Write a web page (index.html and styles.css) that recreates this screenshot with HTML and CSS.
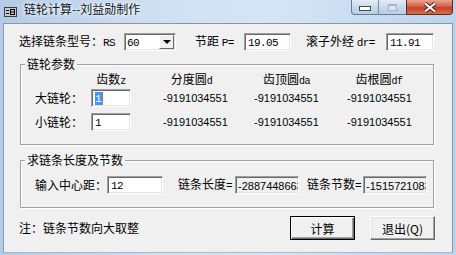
FILE: index.html
```html
<!doctype html>
<html lang="zh-CN">
<head>
  <meta charset="utf-8">
  <title>链轮计算--刘益勋制作</title>
  <link rel="stylesheet" href="styles.css">
</head>
<body>
  <div class="window">

    <!-- title bar -->
    <div class="titlebar">
      <svg class="appicon" width="13" height="10" viewBox="0 0 13 10">
        <rect x="0.5" y="0.5" width="12" height="9" fill="#c8c8c8" stroke="#3c3c3c"/>
        <path d="M2 3.5h3M2 6.5h3" stroke="#000"/>
        <rect x="6.5" y="2.5" width="4" height="5" fill="none" stroke="#000"/>
        <path d="M7 5h3" stroke="#000"/>
      </svg>
      <span class="title">链轮计算--刘益勋制作</span>
      <div class="caption">
        <div class="capgroup">
          <span class="capbtn btnmin"><i></i></span>
          <span class="capbtn btnmax"><i></i></span>
        </div>
        <span class="btnclose">
          <svg width="14" height="11" viewBox="0 0 14 11">
            <path d="M2 1.5l10 8M12 1.5l-10 8" stroke="#5a2418" stroke-width="4"/>
            <path d="M2 1.5l10 8M12 1.5l-10 8" stroke="#fff" stroke-width="2"/>
          </svg>
        </span>
      </div>
    </div>

    <div class="client">

      <div class="toprow">
        <span class="lbl lbl-type">选择链条型号：<span class="m">RS</span></span>
        <div class="combo">
          <span class="combo-val m">60</span>
          <span class="combo-btn"><i></i></span>
        </div>
        <span class="lbl lbl-pitch">节距 <span class="m">P=</span></span>
        <div class="txt w47 m">19.05</div>
        <span class="lbl lbl-dr">滚子外经 <span class="m">dr=</span></span>
        <div class="txt w48 m">11.91</div>
      </div>

      <fieldset class="group g1">
        <legend>链轮参数</legend>
        <div class="grid">
          <span></span>
          <span class="hd hd-z">齿数<span class="m sm">z</span></span>
          <span class="hd hd-d">分度圆<span class="m sm">d</span></span>
          <span class="hd hd-da">齿顶圆<span class="m sm">da</span></span>
          <span class="hd hd-df">齿根圆<span class="m sm">df</span></span>

          <span class="lbl">大链轮：</span>
          <div class="txt w40 m"><span class="sel">1</span></div>
          <span class="val">-9191034551</span>
          <span class="val">-9191034551</span>
          <span class="val">-9191034551</span>

          <span class="lbl">小链轮：</span>
          <div class="txt w40 m">1</div>
          <span class="val">-9191034551</span>
          <span class="val">-9191034551</span>
          <span class="val">-9191034551</span>
        </div>
      </fieldset>

      <fieldset class="group g2">
        <legend>求链条长度及节数</legend>
        <div class="lenrow">
          <span class="lbl lbl-center">输入中心距：</span>
          <div class="txt w56 m">12</div>
          <span class="lbl lbl-len">链条长度<span class="m">=</span></span>
          <div class="txt ro">-2887448663</div>
          <span class="lbl lbl-cnt">链条节数<span class="m">=</span></span>
          <div class="txt ro">-1515721083</div>
        </div>
      </fieldset>

      <div class="bottomrow">
        <span class="lbl">注：链条节数向大取整</span>
        <button class="btn default">计算</button>
        <button class="btn">退出(Q)</button>
      </div>

    </div>
  </div>
</body>
</html>
```

FILE: styles.css
```css
/* whole page is one dialog window */
body {
  margin: 0;
  width: 456px;
  height: 255px;
  overflow: hidden;
  font-family: "Noto Sans CJK SC", "Liberation Sans", sans-serif;
  font-size: 12px;
  line-height: 14px;
  color: #000;
}

.window {
  width: 456px;
  height: 255px;
  box-sizing: border-box;
  background: linear-gradient(to right, #b3cbe6 0%, #cfe0f2 35%, #d6e5f4 60%, #bcd3ec 100%);
}

/* ---- title bar ---- */
.titlebar {
  display: flex;
  align-items: flex-start;
  height: 23px;
}

.appicon {
  margin: 7px 0 0 4px;
}

.title {
  margin: 2px 0 0 7px;
  color: #10141c;
  text-shadow: 0 0 6px #fff, 0 0 3px #fff;
}

.caption {
  display: flex;
  margin-left: auto;
  margin-right: 3px;
}

.capgroup {
  display: flex;
  height: 15px;
  box-sizing: border-box;
  border: 1px solid #6a7d96;
  border-top: none;
  border-right: none;
  border-radius: 0 0 0 4px;
  background: linear-gradient(#e4edf7, #c6d7ea 55%, #b8cce3);
}

.capbtn {
  display: flex;
  justify-content: center;
  align-items: flex-end;
  box-sizing: border-box;
  height: 14px;
}

.btnmin {
  width: 27px;
  border-right: 1px solid #7d8fa6;
}

.btnmin i {
  display: block;
  width: 10px;
  height: 3px;
  margin-bottom: 3px;
  background: #fff;
  border: 1px solid #3b4a5e;
}

.btnmax {
  width: 27px;
}

.btnmax i {
  display: block;
  width: 9px;
  height: 7px;
  margin-bottom: 3px;
  box-sizing: border-box;
  border: 1px solid #a8b6c6;
  border-top-width: 2px;
  background: #dbe5f0;
}

.btnclose {
  display: flex;
  justify-content: center;
  align-items: center;
  width: 47px;
  height: 15px;
  box-sizing: border-box;
  padding-top: 1px;
  border: 1px solid #5c2a22;
  border-top: none;
  border-radius: 0 0 4px 0;
  background: linear-gradient(#e8a593, #d45f47 45%, #c2412a 55%, #d9704f);
}

/* ---- client area ---- */
.client {
  height: 230px;
  margin: 0 3px;
  box-sizing: border-box;
  padding: 9px 0 0 15px;
  background: #f0f0f0;
  border: 1px solid #8696ab;
  border-bottom-color: #a9b8c9;
}

.m {
  font-family: "Liberation Mono", "DejaVu Sans Mono", monospace;
  font-size: 11px;
  letter-spacing: -0.6px;
}

.sm {
  font-size: 10px;
}

.lbl {
  white-space: nowrap;
  box-sizing: border-box;
}

/* sunken edit box */
.txt {
  height: 18px;
  box-sizing: border-box;
  padding: 2px 0 0 3px;
  background: #fff;
  border: 1px solid;
  border-color: #a0a0a0 #fff #fff #a0a0a0;
  box-shadow: inset 1px 1px 0 #696969, inset -1px -1px 0 #e3e3e3;
  white-space: nowrap;
  overflow: hidden;
}

.w40 { width: 40px; }
.w47 { width: 47px; }
.w48 { width: 48px; }
.w56 { width: 56px; }

.txt.ro {
  width: 64px;
  padding-left: 2px;
  background: #f0f0f0;
  font-family: "Liberation Sans", sans-serif;
  font-size: 11px;
}

.sel {
  background: #3399ff;
  color: #fff;
  padding: 1px 1px 0 0;
  border-right: 1px solid #e07020;
}

.toprow {
  display: flex;
  align-items: center;
  height: 18px;
}

.lbl-type { width: 105px; }
.lbl-pitch { width: 68px; padding-left: 19px; }
.lbl-dr { width: 95px; padding-left: 15px; }

.combo {
  display: flex;
  width: 52px;
  height: 18px;
  box-sizing: border-box;
  background: #fff;
  border: 1px solid;
  border-color: #a0a0a0 #fff #fff #a0a0a0;
  box-shadow: inset 1px 1px 0 #696969, inset -1px -1px 0 #e3e3e3;
}

.combo-val {
  flex: 1;
  padding: 2px 0 0 2px;
}

.combo-btn {
  display: flex;
  justify-content: center;
  align-items: center;
  width: 15px;
  height: 14px;
  margin: 1px 1px 0 0;
  box-sizing: border-box;
  background: #f0f0f0;
  border: 1px solid;
  border-color: #fff #696969 #696969 #fff;
}

.combo-btn i {
  width: 0;
  height: 0;
  border-left: 4px solid transparent;
  border-right: 4px solid transparent;
  border-top: 4px solid #000;
}

/* ---- group boxes ---- */
.group {
  width: 414px;
  box-sizing: border-box;
  margin: 6px 0 0 1px;
  padding: 0;
  min-inline-size: 0;
  border: 1px solid #a0a0a0;
  box-shadow: 1px 1px 0 #fff, inset 1px 1px 0 #fff;
}

.group legend {
  margin-left: 4px;
  padding: 0 2px;
  line-height: 14px;
}

.g2 {
  margin-top: 8px;
}

.grid {
  display: grid;
  grid-template-columns: 56px 72px 91px 93px 64px;
  grid-template-rows: 17px 24px 18px;
  align-items: start;
  padding: 1px 0 13px 14px;
}

.hd {
  text-align: center;
  white-space: nowrap;
}

.hd-z { width: 40px; }
.hd-d { width: 57px; }
.hd-da { width: 65px; }
.hd-df { width: 64px; }

.grid .lbl,
.grid .val {
  line-height: 18px;
}

.val {
  font-family: "Liberation Sans", sans-serif;
  font-size: 11px;
}

.lenrow {
  display: flex;
  align-items: center;
  padding: 9px 0 13px 14px;
}

.lbl-center { width: 72px; }
.lbl-len { width: 72px; padding-left: 15px; }
.lbl-cnt { width: 64px; padding-left: 8px; }

/* ---- bottom ---- */
.bottomrow {
  display: flex;
  align-items: center;
  width: 416px;
  height: 24px;
  margin-top: 8px;
}

.btn {
  width: 65px;
  height: 24px;
  margin-left: 15px;
  padding: 0;
  font-family: "Noto Sans CJK SC", sans-serif;
  font-size: 12px;
  color: #000;
  background: #f0f0f0;
  border: 1px solid;
  border-color: #fff #696969 #696969 #fff;
  box-shadow: inset -1px -1px 0 #a0a0a0, inset 1px 1px 0 #e3e3e3;
}

.btn.default {
  margin-left: auto;
  border-color: #000;
  box-shadow: inset 1px 1px 0 #fff, inset -1px -1px 0 #696969, inset -2px -2px 0 #a0a0a0;
}
```
